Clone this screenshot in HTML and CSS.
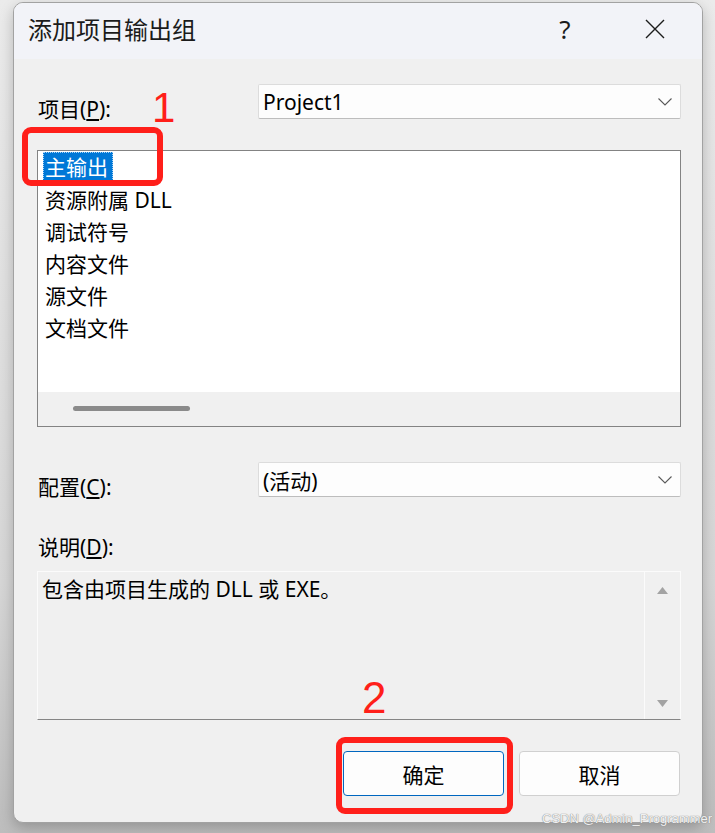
FILE: index.html
```html
<!DOCTYPE html>
<html lang="zh-CN">
<head>
<meta charset="utf-8">
<title>添加项目输出组</title>
<link rel="stylesheet" href="styles.css">
</head>
<body>
<div class="dialog">
  <div class="titlebar">
    <span class="title">添加项目输出组</span>
    <span class="tb-btn help">?</span>
    <span class="tb-btn close">
      <svg width="20" height="20" viewBox="0 0 20 20"><path d="M1 1 L19 19 M19 1 L1 19" stroke="#1c1c1c" stroke-width="1.4" fill="none"/></svg>
    </span>
  </div>
  <div class="content">
    <div class="row">
      <div class="label">项目(<u>P</u>):</div>
      <div class="combo"><span>Project1</span>
        <svg class="chev" width="14" height="8" viewBox="0 0 14 8"><path d="M0.5 0.5 L7 7 L13.5 0.5" stroke="#5a5a5a" stroke-width="1.1" fill="none"/></svg>
      </div>
    </div>
    <div class="listbox">
      <div class="items">
        <div class="item selected"><span class="sel">主输出</span></div>
        <div class="item">资源附属 DLL</div>
        <div class="item">调试符号</div>
        <div class="item">内容文件</div>
        <div class="item">源文件</div>
        <div class="item">文档文件</div>
      </div>
      <div class="hscroll"><div class="thumb"></div></div>
    </div>
    <div class="row row-config">
      <div class="label">配置(<u>C</u>):</div>
      <div class="combo"><span>(活动)</span>
        <svg class="chev" width="14" height="8" viewBox="0 0 14 8"><path d="M0.5 0.5 L7 7 L13.5 0.5" stroke="#5a5a5a" stroke-width="1.1" fill="none"/></svg>
      </div>
    </div>
    <div class="desc-label">说明(<u>D</u>):</div>
    <div class="desc">
      <div class="desc-text">包含由项目生成的 DLL 或 EXE。</div>
      <div class="vscroll">
        <svg width="11" height="7" viewBox="0 0 11 7"><path d="M5.5 0 L11 7 L0 7 Z" fill="#a3a3a3"/></svg>
        <svg width="11" height="7" viewBox="0 0 11 7"><path d="M0 0 L11 0 L5.5 7 Z" fill="#a3a3a3"/></svg>
      </div>
    </div>
    <div class="buttons">
      <button class="btn primary">确定</button>
      <button class="btn">取消</button>
    </div>
  </div>
  <div class="mark mark1"></div>
  <div class="num num1">1</div>
  <div class="num num2">2</div>
  <div class="mark mark2"></div>
</div>
<div class="watermark">CSDN @Admin_Programmer</div>
</body>
</html>
```

FILE: styles.css
```css
html, body {
  margin: 0;
}
body {
  width: 715px;
  height: 833px;
  box-sizing: border-box;
  padding: 2px 12px 0 13px;
  background: linear-gradient(180deg, #ebebeb 0%, #d6d6d6 70%, #bdbdbd 100%);
  position: relative;
  overflow: hidden;
  font-family: "Noto Sans", "Noto Sans CJK SC", sans-serif;
  color: #000;
}
.dialog {
  width: 690px;
  height: 821px;
  box-sizing: border-box;
  border: 1px solid #a2a2a2;
  border-radius: 10px;
  background: #f0f0f0;
  position: relative;
  overflow: hidden;
  box-shadow: 0 5px 14px rgba(0, 0, 0, 0.22);
}
.titlebar {
  height: 56px;
  box-sizing: border-box;
  padding-bottom: 4px;
  background: #f2f3f8;
  display: flex;
  align-items: center;
  padding-left: 14px;
}
.title {
  font-family: "Noto Sans CJK SC", sans-serif;
  font-size: 24px;
  line-height: 1;
  color: #1b1b1b;
}
.tb-btn {
  height: 52px;
  display: flex;
  align-items: center;
  justify-content: center;
}
.help {
  margin-left: auto;
  width: 86px;
  font-size: 26px;
  color: #1b1b1b;
}
.close {
  width: 94px;
}
.content {
  padding: 25px 21px 0 23px;
}
.row {
  display: grid;
  grid-template-columns: 221px 1fr;
  height: 35px;
}
.label, .desc-label {
  font-size: 21px;
  line-height: 28px;
  padding-left: 1px;
}
.label {
  margin-top: 11px;
}
.combo {
  height: 35px;
  box-sizing: border-box;
  border: 1px solid #dcdcdc;
  border-bottom-color: #bdbdbd;
  border-radius: 2px;
  background: #fdfdfd;
  display: flex;
  align-items: center;
  justify-content: space-between;
  padding: 0 8px 0 4px;
  font-size: 21px;
}
.listbox {
  margin-top: 31px;
  height: 277px;
  box-sizing: border-box;
  border: 1px solid #838383;
  background: #fff;
  display: flex;
  flex-direction: column;
}
.items {
  flex: 1;
  padding: 1px 0 0 5px;
}
.item {
  height: 32px;
  line-height: 32px;
  font-size: 21px;
  padding-left: 2px;
}
.item.selected {
  padding-left: 0;
}
.sel {
  display: inline-block;
  height: 31px;
  box-sizing: border-box;
  line-height: 29px;
  border: 1px dotted #a8d2f5;
  background: #0078d7;
  color: #fff;
  padding: 0 4px 0 1px;
  vertical-align: top;
}
.hscroll {
  height: 34px;
  box-sizing: border-box;
  background: #f0f0f0;
  padding: 14px 0 0 35px;
}
.thumb {
  width: 117px;
  height: 5px;
  border-radius: 3px;
  background: #8a8a8a;
}
.row-config {
  margin-top: 35px;
}
.desc-label {
  margin-top: 36px;
}
.desc {
  margin-top: 10px;
  height: 149px;
  box-sizing: border-box;
  border: 1px solid #fbfbfb;
  border-bottom-color: #858585;
  display: flex;
}
.desc-text {
  flex: 1;
  padding: 3px 4px;
  font-size: 21px;
  line-height: 28px;
}
.vscroll {
  width: 35px;
  border-left: 1px solid #fbfbfb;
  display: flex;
  flex-direction: column;
  justify-content: space-between;
  align-items: center;
  padding: 15px 0 12px;
}
.buttons {
  margin-top: 31px;
  display: flex;
  justify-content: flex-end;
  gap: 15px;
  padding-right: 1px;
}
.btn {
  width: 161px;
  height: 45px;
  box-sizing: border-box;
  border: 1px solid #d0d0d0;
  border-radius: 4px;
  background: #fdfdfd;
  font-family: "Noto Sans CJK SC", sans-serif;
  font-size: 21px;
  color: #000;
  padding: 0;
}
.btn.primary {
  border-color: #0067c0;
}
.mark {
  position: absolute;
  box-sizing: border-box;
  border: 6px solid #ff1f1a;
  border-radius: 9px;
}
.mark1 {
  left: 8px;
  top: 124px;
  width: 141px;
  height: 59px;
}
.mark2 {
  left: 322px;
  top: 734px;
  width: 177px;
  height: 77px;
}
.num {
  position: absolute;
  font-family: "Liberation Sans", sans-serif;
  line-height: 1;
  color: #ff1f1a;
}
.num1 {
  left: 138px;
  top: 84px;
  font-size: 42px;
}
.num2 {
  left: 348px;
  top: 673px;
  font-size: 44px;
}
.watermark {
  position: absolute;
  left: 542px;
  top: 811px;
  font-family: "Liberation Sans", sans-serif;
  font-size: 13px;
  color: rgba(255, 255, 255, 0.9);
  text-shadow: 0 0 1px #8a8a8a, 0 0 1px #8a8a8a;
  white-space: nowrap;
}
```
